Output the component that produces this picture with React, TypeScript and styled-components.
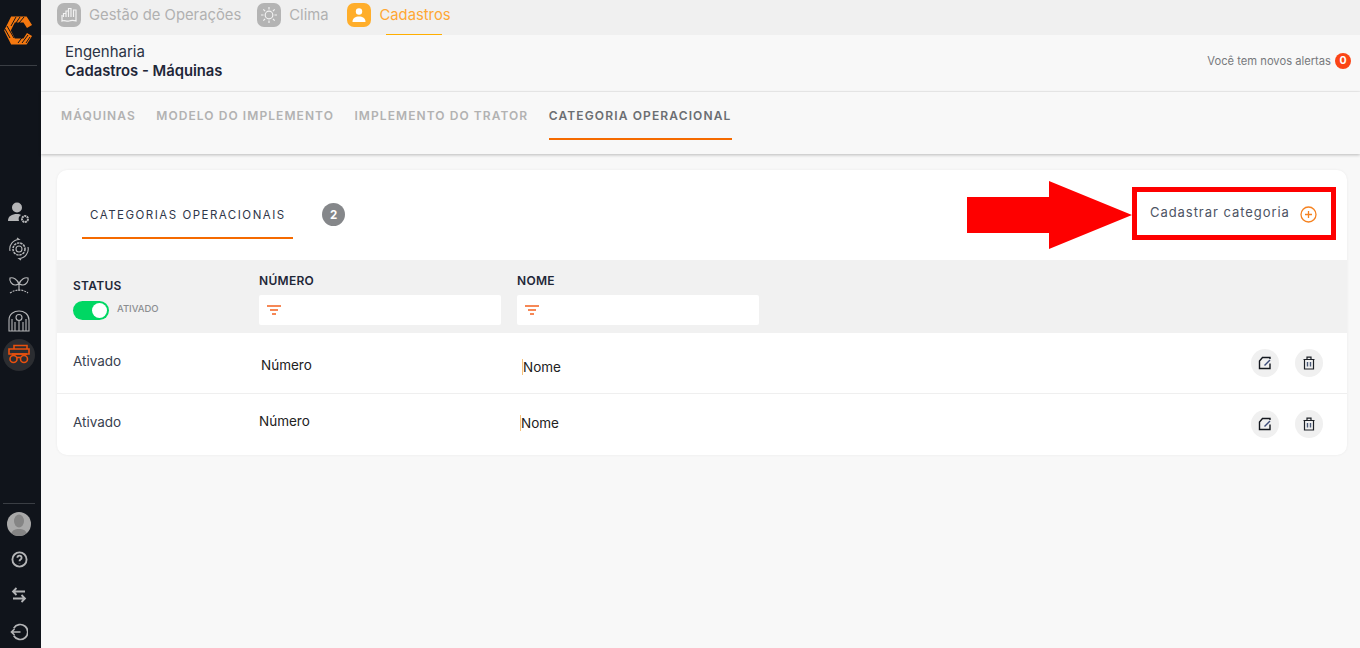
import React from "react";
import styled, { createGlobalStyle } from "styled-components";

const Global = createGlobalStyle`
  html, body { margin: 0; padding: 0; height: 100%; background: #f8f8f8; overflow: hidden; }
  #root { height: 100%; }
  * { box-sizing: border-box; }
  body { font-family: Inter, "Liberation Sans", sans-serif; }
`;

const Page = styled.div`display: flex; height: 648px; width: 1360px; overflow: hidden;`;
const Side = styled.aside`
  width: 41px; flex: none; background: #10141b; display: flex; flex-direction: column; align-items: center; padding-right: 3px;
`;
const LogoBox = styled.div`height: 66px; width: 37px; padding: 16px 0 0 4px; display: flex; border-bottom: 1px solid #3a3e44; margin-bottom: 129px; align-self: flex-start;`;
const SideIcon = styled.div<{ $active?: boolean; $h?: number }>`
  width: 32px; height: ${p => p.$h ?? 36}px; display: flex; align-items: center; justify-content: center;
  border-radius: 50%; background: ${p => (p.$active ? "#2b2d31" : "transparent")}; color: ${p => (p.$active ? "#e8500e" : "#b4b5b7")};
`;
const Spacer = styled.div`flex: 1;`;
const SideRule = styled.div`width: 32px; height: 1px; background: #3a3e44; margin-bottom: 8px;`;
const Avatar = styled.div`width: 24px; height: 24px; border-radius: 50%; overflow: hidden; background: #a9a9a9; margin-bottom: 9px;`;

const Main = styled.main`flex: 1; min-width: 0; display: flex; flex-direction: column; background: #f8f8f8;`;
const TopNav = styled.nav`height: 35px; background: #f0f0f0; display: flex; padding-left: 16px;`;
const NavItem = styled.div<{ $active?: boolean; $gap: number }>`
  position: relative; display: flex; align-items: center; gap: 8px; margin-right: ${p => p.$gap}px; height: 35px; padding-bottom: 6px;
  font-size: 14.8px; color: ${p => (p.$active ? "#ffa733" : "#b1b1b1")};
`;
const NavLine = styled.span`position: absolute; left: 39px; bottom: 0; width: 56px; height: 1px; background: #ffae00;`;
const NavIcon = styled.span<{ $active?: boolean }>`
  width: 24px; height: 24px; border-radius: 7px; display: flex; align-items: center; justify-content: center;
  background: ${p => (p.$active ? "#ffae2b" : "#b4b4b4")};
`;
const Head = styled.header`height: 57px; border-bottom: 1px solid #efefef; display: flex; justify-content: space-between; align-items: center; padding: 0 9px 0 24px;`;
const Crumb = styled.div`font-size: 15px; color: #2a3244; line-height: 19px; margin-top: -3px;`;
const CrumbBold = styled.div`font-weight: 600; font-size: 14.8px; margin-top: 1px; color: #1f2738;`;
const Alert = styled.div`display: flex; align-items: center; gap: 4px; font-size: 11.2px; color: #77797c; margin-top: -5px;`;
const AlertBadge = styled.span`width: 16px; height: 16px; border-radius: 50%; background: #fb4516; color: #fff; font-size: 10.5px; font-weight: 700; display: flex; align-items: center; justify-content: center;`;
const Tabs = styled.div`height: 62px; display: flex; gap: 20.5px; padding-left: 20px; box-shadow: 0 1px 3px rgba(0,0,0,.25); background: #f8f8f8;`;
const Tab = styled.div<{ $active?: boolean }>`
  height: 48px; display: flex; align-items: center; font-size: 12px; font-weight: 600;
  letter-spacing: ${p => (p.$active ? "1.14px" : "1.07px")};
  color: ${p => (p.$active ? "#6b6e72" : "#b2b2b2")};
  border-bottom: 2px solid ${p => (p.$active ? "#f56a00" : "transparent")};
`;
const Content = styled.div`padding: 16px 13px 0 16px;`;
const Card = styled.section`position: relative; background: #fff; border-radius: 10px; box-shadow: 0 0 3px rgba(0,0,0,.06); overflow: visible;`;
const CardHead = styled.div`height: 90px; display: flex; align-items: flex-start; padding: 25px 0 0 25px;`;
const CardTab = styled.div`
  width: 211px; height: 44px; border-bottom: 2px solid #f56a00; display: flex; align-items: flex-start; padding: 13px 0 0 8px;
  font-size: 11.5px; font-weight: 400; letter-spacing: 1.5px; color: #2f374a;
`;
const Count = styled.span`
  margin: 8px 0 0 29px; width: 23px; height: 23px; border-radius: 50%; background: #85878a; color: #fff;
  font-size: 11.5px; font-weight: 700; display: flex; align-items: center; justify-content: center;
`;
const AddLabel = styled.div`
  position: absolute; left: 1093px; top: 31px; display: flex; align-items: center; gap: 10px;
  font-size: 13px; letter-spacing: .95px; color: #4d5464; white-space: nowrap;
`;
const AddIcon = styled.svg`margin-top: 5px;`;
const RedBox = styled.div`position: absolute; left: 1075px; top: 17px; width: 204px; height: 53px; border: 5px solid #fe0000;`;
const Arrow = styled.svg`position: absolute; left: 909px; top: 10px;`;
const Grid = styled.div`display: grid; grid-template-columns: 202px 258px 1fr 96px;`;
const TableHead = styled(Grid)`height: 73px; background: #f1f1f1;`;
const HeadCell = styled.div<{ $pad: number }>`padding: ${p => p.$pad}px 0 0 16px;`;
const HeadCell2 = styled.div`padding: 13px 0 0 0;`;
const ColLabel = styled.div`font-size: 12px; font-weight: 600; letter-spacing: .3px; color: #1f2738; line-height: 16px;`;
const ToggleRow = styled.div`display: flex; align-items: center; gap: 8px; margin-top: 7px;`;
const Toggle = styled.div`width: 36px; height: 19px; border-radius: 10px; background: #00d763; position: relative;`;
const Knob = styled.span`position: absolute; right: 2px; top: 2px; width: 15px; height: 15px; border-radius: 50%; background: #fff;`;
const ToggleText = styled.span`font-size: 9.5px; font-weight: 500; color: #8b8d90; margin-top: -4px;`;
const FilterBox = styled.div`width: 242px; height: 30px; margin-top: 6px; background: #fff; border-radius: 2px; display: flex; align-items: center; padding-left: 8px;`;
const Row = styled(Grid)<{ $h: number; $line?: boolean }>`
  height: ${p => p.$h}px; border-bottom: ${p => (p.$line ? "1px solid #efefef" : "0")};
`;
const StatusCell = styled.div<{ $top: number }>`padding: ${p => p.$top}px 0 0 16px; font-size: 13.5px; color: #39414f; line-height: 18px;`;
const NumberCell = styled.div<{ $top: number; $left: number }>`padding: ${p => p.$top}px 0 0 ${p => p.$left}px; font-size: 13.5px; color: #222; line-height: 18px;`;
const NameCell = styled.div<{ $top: number; $left: number }>`
  padding: ${p => p.$top}px 0 0 ${p => p.$left}px; font-size: 13.5px; color: #222; line-height: 18px;
`;
const NameText = styled.span`border-left: 1px solid #f8c27a; padding-left: 0;`;
const Actions = styled.div`display: flex; gap: 16px; align-items: flex-start; padding-top: 16px;`;
const ActionBtn = styled.button`
  width: 28px; height: 28px; flex: none; padding: 0; border: 0; border-radius: 50%; background: #f0f0f0; display: flex; align-items: center; justify-content: center;
`;

const Logo = () => (
  <svg width="30" height="29" viewBox="0 0 30 29" fill="none">
    <path d="M25.500 10.500L21 3.500H9L3.500 14.500 9 25.500h12l4.500-7" stroke="#f5780f" strokeWidth="6" strokeLinejoin="miter" />
    <path d="M12 1L7 10M16 1l-6 9M20 1l-5 6M1 13l5 9M3 10l7 12M14 27l6-8M18 27l6-8M22 27l4-6" stroke="#10141b" strokeWidth="1" />
  </svg>
);
const Filter = () => (
  <svg width="14" height="10" viewBox="0 0 14 10"><path d="M0 1h14M3 5h8M5 9h4" stroke="#f4621f" strokeWidth="1.4" /></svg>
);
const Edit = () => (
  <svg width="14" height="14" viewBox="0 0 14 14" fill="none" stroke="#14181f" strokeWidth="1.4">
    <path d="M12 7.500v5H1.500V5L4.500 1.500h7.500V3" /><path d="M6.500 9.500L12 4" stroke="#3c4c7a" />
  </svg>
);
const Trash = () => (
  <svg width="14" height="14" viewBox="0 0 14 14" fill="none" stroke="#1c2026" strokeWidth="1.2">
    <path d="M1.500 3.500h11M5 3V1.200h4V3M2.500 3.500v9.500h9V3.500" /><path d="M5.500 6v4.500M8.500 6v4.500" stroke="#4a5a78" strokeWidth="1.400" />
  </svg>
);

const rows = [
  { h: 61, line: true, s: 19, nt: 23, nl: 2, mt: 25, ml: 5 },
  { h: 61, line: false, s: 19, nt: 18, nl: 0, mt: 20, ml: 3 },
];

export default function App() {
  return (
    <Page>
      <Global />
      <Side>
        <LogoBox><Logo /></LogoBox>
        <SideIcon>
          <svg width="24" height="24" viewBox="0 0 24 24" fill="currentColor">
            <circle cx="10" cy="6.500" r="5" /><path d="M1 20c0-5 4-7 9-7 2 0 3 .3 4 1-2 1-3 3-2 6z" />
            <circle cx="18" cy="18" r="3" fill="none" stroke="currentColor" strokeWidth="2" strokeDasharray="2 .6" />
          </svg>
        </SideIcon>
        <SideIcon>
          <svg width="24" height="24" viewBox="0 0 24 24" fill="none" stroke="currentColor" strokeWidth="1.1">
            <circle cx="12" cy="12" r="3" /><circle cx="12" cy="12" r="6" strokeDasharray="2.400 .8" strokeWidth="1.600" />
            <path d="M3 14A9.500 9.500 0 0 1 12 2.500l-2-1.500M21 10a9.500 9.500 0 0 1-9 11.500l2 1.500" />
          </svg>
        </SideIcon>
        <SideIcon>
          <svg width="24" height="24" viewBox="0 2 24 24" fill="none" stroke="currentColor" strokeWidth="1.200">
            <path d="M12 20V13C10 8 6 6 3 7c-1 3 2 7 5 7 2 0 3-1 4-1 1 0 2 1 4 1 3 0 6-4 5-7-3-1-7 1-9 6" />
            <path d="M3 22c3-2 6-3 9-3s6 1 9 3" strokeDasharray="2 1" />
          </svg>
        </SideIcon>
        <SideIcon>
          <svg width="24" height="24" viewBox="0 0 24 24" fill="none" stroke="currentColor" strokeWidth="1.100">
            <path d="M2 22V11C2 5 7 2 12 2s10 3 10 9v11z" /><circle cx="12" cy="8.500" r="3" />
            <path d="M5 22V10M8 22v-9M12 22V12M16 22v-9M19 22V10" />
          </svg>
        </SideIcon>
        <SideIcon $active $h={32}>
          <svg width="24" height="22" viewBox="0 0 24 22" fill="none" stroke="currentColor" strokeWidth="1.600">
            <path d="M7 5V1.500h13V5" /><path d="M2 5h20v5H2z" /><path d="M5 10h15" /><circle cx="6.500" cy="15" r="3.500" /><circle cx="17" cy="15" r="3.500" /><path d="M10 13.500h3.500" />
          </svg>
        </SideIcon>
        <Spacer />
        <SideRule />
        <Avatar>
          <svg width="24" height="24" viewBox="0 0 24 24" fill="#858585"><ellipse cx="12" cy="9" rx="5" ry="6.500" /><path d="M4 24c0-6 4-7 8-7s8 1 8 7z" /></svg>
        </Avatar>
        <SideIcon $h={28}>
          <svg width="17" height="17" viewBox="0 0 24 24" fill="none" stroke="currentColor" strokeWidth="2.600">
            <circle cx="12" cy="12" r="10" /><path d="M9 9.500a3 3 0 1 1 4.500 2.600c-1 .6-1.500 1.200-1.500 2.400M12 17.500v.5" />
          </svg>
        </SideIcon>
        <SideIcon $h={43}>
          <svg width="16" height="16" viewBox="0 0 16 16" fill="none" stroke="currentColor" strokeWidth="1.800">
            <path d="M14 4.500H2M5.500 1L2 4.500 5.500 8M2 11.500h12M10.500 8l3.500 3.500-3.500 3.500" />
          </svg>
        </SideIcon>
        <SideIcon $h={32}>
          <svg width="18" height="18" viewBox="0 0 24 24" fill="none" stroke="currentColor" strokeWidth="2.200">
            <path d="M5 7a10 10 0 1 1 0 10M14 12H2M6 8l-4 4 4 4" />
          </svg>
        </SideIcon>
      </Side>
      <Main>
        <TopNav>
          <NavItem $gap={16}>
            <NavIcon>
              <svg width="18" height="18" viewBox="0 0 18 18" fill="none" stroke="#f2f2f2" strokeWidth="1.200"><path d="M2 9v6c3-1.500 4 1 7 0s4-1 7 0V4h-2.500v7M11 11V2.500H8.500V11M8.500 11V5H6v6M6 11V7.500H3.500V11" /></svg>
            </NavIcon>
            Gestão de Operações
          </NavItem>
          <NavItem $gap={19}>
            <NavIcon>
              <svg width="18" height="18" viewBox="0 0 18 18" fill="none" stroke="#f2f2f2" strokeWidth="1.200"><circle cx="9" cy="9" r="3.800" /><path d="M9 1v2.500M9 14.500V17M1 9h2.500M14.500 9H17M3.300 3.300l1.800 1.800M12.900 12.900l1.800 1.800M3.300 14.700l1.800-1.800M12.900 5.100l1.800-1.800" /></svg>
            </NavIcon>
            Clima
          </NavItem>
          <NavItem $active $gap={0}>
            <NavIcon $active>
              <svg width="16" height="16" viewBox="0 0 16 16" fill="#fff"><circle cx="8" cy="4.500" r="3.200" /><path d="M1.500 15c0-4 3-5.500 6.500-5.500s6.500 1.500 6.500 5.500z" /></svg>
            </NavIcon>
            Cadastros
            <NavLine />
          </NavItem>
        </TopNav>
        <Head>
          <Crumb>
            Engenharia
            <CrumbBold>Cadastros - Máquinas</CrumbBold>
          </Crumb>
          <Alert>Você tem novos alertas <AlertBadge>0</AlertBadge></Alert>
        </Head>
        <Tabs>
          <Tab>MÁQUINAS</Tab>
          <Tab>MODELO DO IMPLEMENTO</Tab>
          <Tab>IMPLEMENTO DO TRATOR</Tab>
          <Tab $active>CATEGORIA OPERACIONAL</Tab>
        </Tabs>
        <Content>
          <Card>
            <CardHead>
              <CardTab>CATEGORIAS OPERACIONAIS</CardTab>
              <Count>2</Count>
            </CardHead>
            <Arrow width="166" height="70" viewBox="0 0 166 70"><path d="M1 17h82V1l83 34-83 34V53H1z" fill="#fe0000" /></Arrow>
            <RedBox />
            <AddLabel>
              Cadastrar categoria
              <AddIcon width="17" height="17" viewBox="0 0 17 17" fill="none" stroke="#f58220" strokeWidth="1.300"><circle cx="8.500" cy="8.500" r="7.500" /><path d="M8.500 5v7M5 8.500h7" /></AddIcon>
            </AddLabel>
            <TableHead>
              <HeadCell $pad={18}>
                <ColLabel>STATUS</ColLabel>
                <ToggleRow><Toggle><Knob /></Toggle><ToggleText>ATIVADO</ToggleText></ToggleRow>
              </HeadCell>
              <HeadCell2>
                <ColLabel>NÚMERO</ColLabel>
                <FilterBox><Filter /></FilterBox>
              </HeadCell2>
              <HeadCell2>
                <ColLabel>NOME</ColLabel>
                <FilterBox><Filter /></FilterBox>
              </HeadCell2>
              <div />
            </TableHead>
            {rows.map((r, i) => (
              <Row key={i} $h={r.h} $line={r.line}>
                <StatusCell $top={r.s}>Ativado</StatusCell>
                <NumberCell $top={r.nt} $left={r.nl}>Número</NumberCell>
                <NameCell $top={r.mt} $left={r.ml}><NameText>Nome</NameText></NameCell>
                <Actions>
                  <ActionBtn><Edit /></ActionBtn>
                  <ActionBtn><Trash /></ActionBtn>
                </Actions>
              </Row>
            ))}
          </Card>
        </Content>
      </Main>
    </Page>
  );
}
